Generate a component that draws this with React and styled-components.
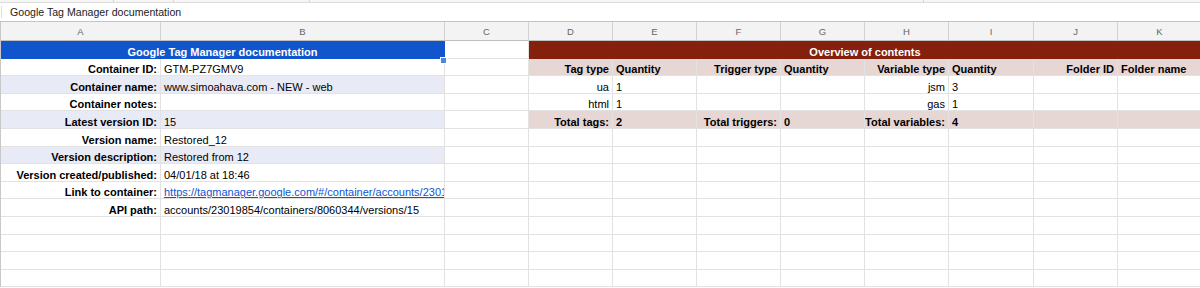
import React from 'react';
import styled, { createGlobalStyle } from 'styled-components';

const GlobalStyle = createGlobalStyle`
  html, body {
    margin: 0;
    padding: 0;
    background: #ffffff;
  }
  body {
    font-family: "Liberation Sans", Arial, sans-serif;
    color: #000;
  }
`;

const COLUMNS = [160, 284, 84, 84, 84, 84, 84, 84, 85, 84, 84];
const LETTERS = ['A', 'B', 'C', 'D', 'E', 'F', 'G', 'H', 'I', 'J', 'K'];

const LAVENDER = '#e8eaf6';
const PINK = '#e6d6d4';

const Page = styled.div`
  width: 1200px;
  height: 288px;
  overflow: hidden;
  background: #fff;
`;

const TopStrip = styled.div`
  display: flex;
  height: 2px;
  background: #f6f6f6;
  border-bottom: 1px solid #dcdcdc;
`;

const StripPart = styled.div`
  width: ${props => props.$w}px;
  border-right: 1px solid #d4d4d4;
`;

const FormulaBar = styled.div`
  display: flex;
  align-items: center;
  height: 18px;
  border-bottom: 1px solid #c4c4c4;
`;

const FormulaText = styled.div`
  height: 12px;
  line-height: 12px;
  padding-left: 8px;
  margin-left: 1px;
  border-left: 1px solid #e0e0e0;
  font-size: 10.6px;
  color: #222;
`;

const Grid = styled.div`
  position: relative;
  display: grid;
  grid-template-columns: ${COLUMNS.map(w => `${w}px`).join(' ')};
  grid-template-rows: 19px;
  grid-auto-rows: 17.6px;
  width: 1201px;
  border-left: 1px solid #c8c8c8;
  box-sizing: border-box;
`;

const ColHeader = styled.div`
  display: flex;
  align-items: center;
  justify-content: center;
  box-sizing: border-box;
  background: #f3f3f3;
  border-right: 1px solid #d2d2d2;
  border-bottom: 1px solid #c0c0c0;
  font-size: 9.5px;
  color: #666;
`;

const Cell = styled.div`
  display: flex;
  align-items: flex-end;
  justify-content: ${props =>
    props.$align === 'right' ? 'flex-end' : props.$align === 'center' ? 'center' : 'flex-start'};
  grid-column: ${props => (props.$span ? `span ${props.$span}` : 'auto')};
  box-sizing: border-box;
  padding: 0 3px;
  background: ${props => props.$bg || '#fff'};
  border-right: 1px solid ${props => props.$line || '#e2e2e2'};
  border-bottom: 1px solid ${props => props.$line || '#e2e2e2'};
  font-size: 11px;
  font-weight: ${props => (props.$bold ? 700 : 400)};
  color: ${props => props.$color || '#000'};
  white-space: nowrap;
  overflow: hidden;
`;

const Link = styled.span`
  color: #1155cc;
  text-decoration: underline;
`;

const SelectionHandle = styled.div`
  position: absolute;
  left: 439px;
  top: 35px;
  width: 5px;
  height: 5px;
  background: #4a86e8;
  border: 1px solid #fff;
`;

const info = [
  { label: 'Container ID:', value: 'GTM-PZ7GMV9' },
  { label: 'Container name:', value: 'www.simoahava.com - NEW - web', shaded: true },
  { label: 'Container notes:', value: '' },
  { label: 'Latest version ID:', value: '15', shaded: true },
  { label: 'Version name:', value: 'Restored_12' },
  { label: 'Version description:', value: 'Restored from 12', shaded: true },
  { label: 'Version created/published:', value: '04/01/18 at 18:46' },
  { label: 'Link to container:', value: 'https://tagmanager.google.com/#/container/accounts/23019854/containers/8060344', link: true },
  { label: 'API path:', value: 'accounts/23019854/containers/8060344/versions/15' },
];

// columns D..K for rows 2..5
const overview = [
  { bg: PINK, bold: true, cells: ['Tag type', 'Quantity', 'Trigger type', 'Quantity', 'Variable type', 'Quantity', 'Folder ID', 'Folder name'] },
  { cells: ['ua', '1', '', '', 'jsm', '3', '', ''] },
  { cells: ['html', '1', '', '', 'gas', '1', '', ''] },
  { bg: PINK, bold: true, cells: ['Total tags:', '2', 'Total triggers:', '0', 'Total variables:', '4', '', ''] },
];

const EMPTY_ROWS = 4;

const App = () => {
  const rows = [];

  info.forEach((row, i) => {
    const bg = row.shaded ? LAVENDER : '#fff';
    const ov = overview[i];
    rows.push(
      <React.Fragment key={row.label}>
        <Cell $align="right" $bold $bg={bg}>{row.label}</Cell>
        <Cell $bg={bg}>{row.link ? <Link>{row.value}</Link> : row.value}</Cell>
        <Cell />
        {ov
          ? ov.cells.map((text, c) => (
              <Cell key={c} $align={c % 2 === 0 ? 'right' : 'left'} $bold={ov.bold} $bg={ov.bg}>
                {text}
              </Cell>
            ))
          : LETTERS.slice(3).map(l => <Cell key={l} />)}
      </React.Fragment>
    );
  });

  for (let r = 0; r < EMPTY_ROWS; r++) {
    LETTERS.forEach(l => rows.push(<Cell key={`e${r}${l}`} />));
  }

  return (
    <Page>
      <GlobalStyle />
      <TopStrip>
        <StripPart $w={113} />
        <StripPart $w={59} />
        <StripPart $w={135} />
        <StripPart $w={613} />
      </TopStrip>
      <FormulaBar>
        <FormulaText>Google Tag Manager documentation</FormulaText>
      </FormulaBar>
      <Grid>
        {LETTERS.map(l => (
          <ColHeader key={l}>{l}</ColHeader>
        ))}
        <Cell $span={2} $align="center" $bold $bg="#1155cc" $color="#fff" $line="#1155cc">
          Google Tag Manager documentation
        </Cell>
        <Cell />
        <Cell $span={8} $align="center" $bold $bg="#85200c" $color="#fff" $line="#85200c">
          Overview of contents
        </Cell>
        {rows}
        <SelectionHandle />
      </Grid>
    </Page>
  );
};

export default App;
